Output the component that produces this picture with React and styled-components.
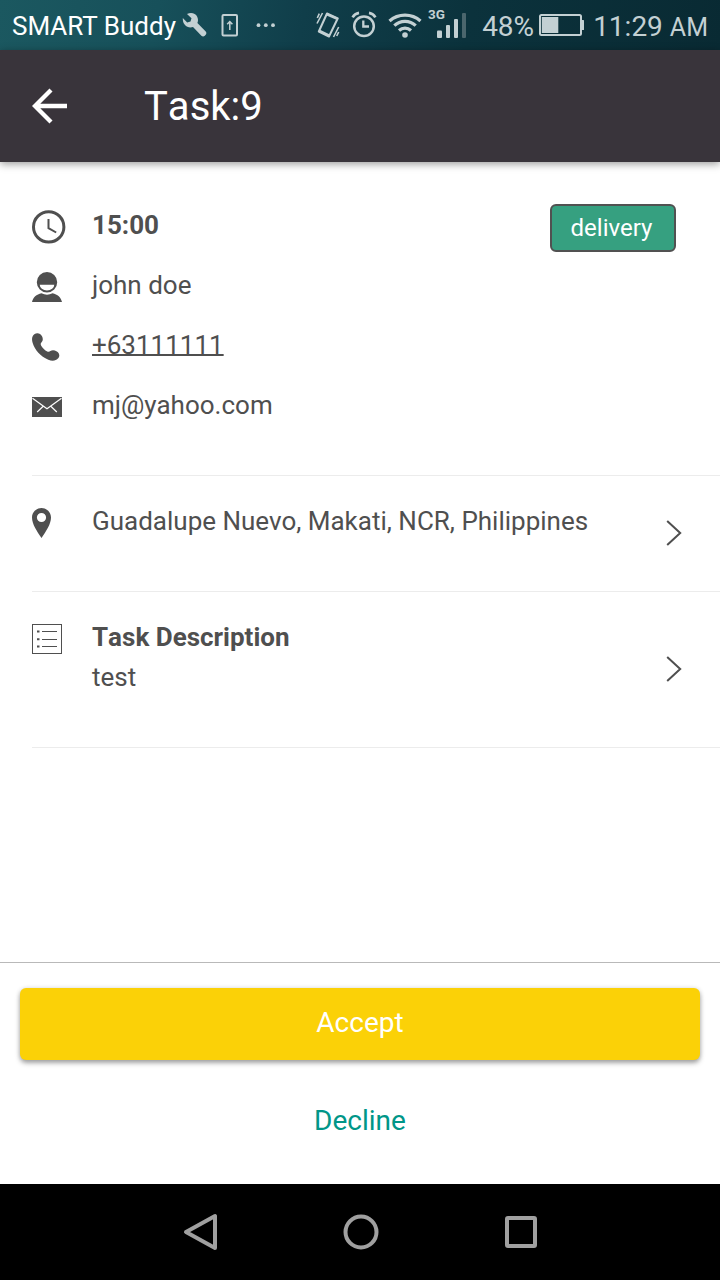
import React,{Component} from 'react';
import styled,{createGlobalStyle} from 'styled-components';

const GlobalStyle=createGlobalStyle`
    *{
        box-sizing:border-box;
    }
    body{
        margin:0;
        background:#fff;
        color:#4f4f4f;
        font-family:Roboto,sans-serif;
        font-size:26px;
        line-height:40px;
    }
    svg{
        display:block;
        flex:none;
    }
    button{
        border:0;
        padding:0;
        background:none;
        font-family:inherit;
    }
`
const Page=styled.div`
    height:1280px;
    display:flex;
    flex-direction:column;
    overflow:hidden;
`
const StatusBar=styled.div`
    height:50px;
    flex:none;
    display:flex;
    justify-content:space-between;
    padding:0 12px;
    color:#c3d0d3;
    line-height:53px;
    white-space:nowrap;
    background:linear-gradient(100deg,#1b5860 0%,#17505a 22%,#103e4a 42%,#0b323c 65%,#092a33 100%);
`
const StatusGroup=styled.div`
    display:flex;
    gap:${props=>props.$gap||0}px;
    margin-left:${props=>props.$left||0}px;
`
const Carrier=styled.span`
    width:170px;
    color:#fff;
`
const Percent=styled.span`
    font-size:28px;
    margin-left:14px;
    width:57px;
`
const Clock=styled.span`
    font-size:28px;
    margin-left:8px;
    small{
        font-size:25px;
        margin-left:7px;
    }
`
const Header=styled.header`
    height:112px;
    flex:none;
    display:flex;
    align-items:center;
    padding-left:32px;
    background:#39343b;
    color:#fff;
    box-shadow:0 2px 8px rgba(0,0,0,.4);
`
const Title=styled.h1`
    margin:1px 0 0 76px;
    font-size:40px;
    font-weight:400;
    line-height:48px;
    font-kerning:none;
`
const Content=styled.main`
    flex:1;
    padding-top:18px;
`
const Section=styled.section`
    display:flex;
    align-items:center;
    margin-left:32px;
    padding-right:38px;
    border-bottom:1px solid #ececec;
`
const List=styled.div`
    flex:1;
    display:flex;
    flex-direction:column;
    gap:20px;
    padding:25px 0 50px;
`
const Row=styled.div`
    display:flex;
`
const IconCell=styled.span`
    width:60px;
    flex:none;
    padding-top:${props=>props.$top}px;
`
const Text=styled.div`
    flex:1;
    white-space:nowrap;
    strong{
        display:block;
        font-weight:700;
        font-kerning:none;
    }
    a{
        color:inherit;
        text-decoration:underline;
        text-decoration-thickness:2px;
        text-underline-offset:0;
        text-decoration-skip-ink:none;
    }
`
const Badge=styled.span`
    align-self:flex-start;
    width:126px;
    height:48px;
    margin:24px 6px 0 0;
    border:2px solid #515151;
    border-radius:6px;
    background:#36a080;
    color:#fff;
    font-size:24px;
    line-height:44px;
    text-align:center;
    padding-right:3px;
`
const Footer=styled.footer`
    height:222px;
    flex:none;
    border-top:1px solid #b9b9b9;
    padding:25px 20px 0;
    display:flex;
    flex-direction:column;
    gap:24px;
`
const Button=styled.button`
    height:72px;
    border-radius:6px;
    font-size:28px;
    line-height:68px;
    padding:${props=>props.$primary?'0 0 2px':'2px 0 0'};
    color:${props=>props.$primary?'#fff':'#009688'};
    background:${props=>props.$primary?'#fbd107':'transparent'};
    box-shadow:${props=>props.$primary?'0 3px 5px rgba(0,0,0,.35),0 0 5px rgba(0,0,0,.1)':'none'};
`
const NavBar=styled.nav`
    height:96px;
    flex:none;
    display:flex;
    align-items:center;
    justify-content:center;
    gap:120px;
    background:#000;
`

const BackArrow=()=><svg width="36" height="36" viewBox="0 0 36 36" fill="none" stroke="#fff" strokeWidth="4.3">
    <path d="M19 2 3 18l16 16M2.5 18H35"/>
</svg>
const WrenchIcon=()=><svg width="26" height="50" viewBox="0 0 26 50" fill="#c3d0d3">
    <path d="M.8 18 5.200 22.600 8.500 21.500 9.500 18.300 5 14C9.200 12 13.500 13.300 15.200 16.700c1.100 2.200 1 4.300.2 6.300l8.300 8.500c.9 1 .9 2.200 0 3.200l-.9 1c-1 1-2.400 1-3.400 0l-8.400-8.700C5.700 28.700.3 24.900.8 18z"/>
</svg>
const UploadIcon=()=><svg width="18" height="50" viewBox="0 0 18 50" fill="none" stroke="#c3d0d3">
    <rect x="1.500" y="15" width="14.500" height="20.500" rx="1" strokeWidth="2"/>
    <path d="M8.800 30v-8M6.200 24.300 8.800 21.500l2.600 2.800" strokeWidth="1.500"/>
</svg>
const DotsIcon=()=><svg width="20" height="50" viewBox="0 0 20 50" fill="#c3d0d3">
    <circle cx="2.500" cy="25.200" r="1.900"/>
    <circle cx="9.800" cy="25.200" r="1.900"/>
    <circle cx="17" cy="25.200" r="1.900"/>
</svg>
const VibrateIcon=()=><svg width="24" height="50" viewBox="0 0 24 50" fill="none" stroke="#c3d0d3">
    <path d="m11 13.500 10.800 4.800L13 36.500 2.800 31.500z" strokeWidth="2" strokeLinejoin="round"/>
    <path d="M3.500 30.800 12.800 35.300M11 14.300 20.800 18.700" strokeWidth="2.400"/>
    <path d="m1.300 18 2-4.300M1 23.500l5.500-10.500M22.700 27l-5.200 10M22.700 32l-2 4" strokeWidth="1.600"/>
</svg>
const AlarmIcon=()=><svg width="26" height="50" viewBox="0 0 26 50" fill="none" stroke="#c3d0d3">
    <circle cx="13" cy="26.200" r="9.800" strokeWidth="2.500"/>
    <path d="M12.300 20.500V26.500H18" strokeWidth="2.300"/>
    <path d="M1.600 17.300c1.200-2.200 3.400-3.900 6.400-4.400M24.400 17.300c-1.200-2.200-3.400-3.900-6.400-4.400" strokeWidth="2.600"/>
</svg>
const WifiIcon=()=><svg width="34" height="50" viewBox="0 0 34 50" fill="none" stroke="#c3d0d3" strokeWidth="3.200">
    <path d="M1.500 21c8.700-7.900 22.300-7.900 31 0M6.300 25.700c6-5.700 15.400-5.700 21.400 0M11 30.500c3.500-3.200 8.500-3.200 12 0"/>
    <circle cx="17" cy="35" r="2.800" fill="#c3d0d3" stroke="none"/>
</svg>
const SignalIcon=()=><svg width="40" height="50" viewBox="0 0 40 50" fill="#c3d0d3">
    <text x="0" y="18.700" fontSize="13.500" fontWeight="700" fontFamily="Roboto,sans-serif">3G</text>
    <rect x="9" y="30.500" width="5" height="7.500" rx="1"/>
    <rect x="18" y="25" width="4" height="13" rx="1"/>
    <rect x="26" y="19" width="4" height="19" rx="1"/>
    <rect x="34" y="13" width="4" height="25" rx="1" fill="#4b666d"/>
</svg>
const BatteryIcon=()=><svg width="46" height="50" viewBox="0 0 46 50" fill="#c3d0d3">
    <rect x="1" y="15" width="41" height="20" rx="1.500" fill="none" stroke="#c3d0d3" strokeWidth="2"/>
    <rect x="2.800" y="17" width="16.500" height="16"/>
    <rect x="42" y="20" width="3" height="10" rx=".5"/>
</svg>

const ClockIcon=()=><svg width="34" height="34" viewBox="0 0 34 34" fill="none" stroke="#4f4f4f">
    <circle cx="16.700" cy="16.900" r="15.200" strokeWidth="3"/>
    <path d="M16.500 9v9.200L24.200 22.500" strokeWidth="2"/>
</svg>
const PersonIcon=()=><svg width="30" height="31" viewBox="0 0 30 31" fill="#4f4f4f">
    <path fillRule="evenodd" d="M15 0a10.200 10.200 0 0 1 0 20.400A10.200 10.200 0 0 1 15 0zM7.700 12.800a7.300 5.600 0 0 0 14.600 0z"/>
    <path d="M0 30c.8-4.300 4.500-7.800 9.500-8.700 3.500 1.900 7.500 1.900 11 0 5 .9 8.700 4.400 9.500 8.700z"/>
</svg>
const PhoneIcon=()=><svg width="28" height="29" viewBox="0 0 28 29" fill="#4f4f4f">
    <path d="M2.300 1.300C5-.6 8.500.3 10 3.200c1.400 2.800.8 4.700-.6 6.300-.9 1-.9 2-.2 3.200 1.500 2.600 3.500 4.500 6 5.700 1.200.6 2.200.5 3.200-.4 1.600-1.200 4-1.200 6.500.5 2.600 1.800 3.200 4.500 1.300 6.800-2.200 2.700-6 3.200-9.900 1.500C8.500 23.500 2.800 17 .6 9.800-.4 6.400-.2 3.200 2.300 1.300z"/>
</svg>
const MailIcon=()=><svg width="30" height="20" viewBox="0 0 30 20" fill="none" stroke="#fff" strokeWidth="1.200">
    <path d="M0 0h30v20H0z" fill="#4f4f4f" stroke="none"/>
    <path d="m.5 1.300 14.500 10.500L29.500 1.300M5.200 15l6-5.700M24.800 15l-6-5.700"/>
</svg>
const PinIcon=()=><svg width="19" height="30" viewBox="0 0 19 30" fill="#4f4f4f">
    <path fillRule="evenodd" d="M9.500 0C14.800 0 19 4.300 19 9.500 19 16 14 23.500 9.500 30 5 23.500 0 16 0 9.500 0 4.300 4.200 0 9.500 0zm0 4.900a4.600 4.600 0 1 0 0 9.200 4.600 4.600 0 0 0 0-9.200z"/>
</svg>
const ListIcon=()=><svg width="30" height="30" viewBox="0 0 30 30" fill="none" stroke="#4f4f4f">
    <rect x=".5" y=".5" width="29" height="29"/>
    <path d="M10 7.500h15M10 15.500h15M10 22.500h15"/>
    <path d="M5 7.500h2.500M5 15.300h2.500M5 22.500h2.500" strokeWidth="2"/>
</svg>
const Chevron=()=><svg width="16" height="27" viewBox="0 0 16 27" fill="none" stroke="#4f4f4f" strokeWidth="2">
    <path d="M1.200 1 14.200 13 1.200 25"/>
</svg>

class App extends Component{
    constructor(props){
        super(props)
        this.state={
            contact:[
                {icon:<ClockIcon/>,top:5,text:<strong>15:00</strong>},
                {icon:<PersonIcon/>,top:7,text:'john doe'},
                {icon:<PhoneIcon/>,top:8,text:<a>+63111111</a>},
                {icon:<MailIcon/>,top:12,text:'mj@yahoo.com'}
            ]
        }
    }
    render(){
        let {contact}=this.state;
        return <Page>
            <GlobalStyle/>
            <StatusBar>
                <StatusGroup>
                    <Carrier>SMART Buddy</Carrier>
                    <WrenchIcon/>
                    <StatusGroup $left={13} $gap={17}>
                        <UploadIcon/>
                        <DotsIcon/>
                    </StatusGroup>
                </StatusGroup>
                <StatusGroup>
                    <StatusGroup $gap={11}>
                        <VibrateIcon/>
                        <AlarmIcon/>
                        <WifiIcon/>
                    </StatusGroup>
                    <StatusGroup $left={6}>
                        <SignalIcon/>
                    </StatusGroup>
                    <Percent>48%</Percent>
                    <BatteryIcon/>
                    <Clock>11:29<small>AM</small></Clock>
                </StatusGroup>
            </StatusBar>
            <Header>
                <BackArrow/>
                <Title>Task:9</Title>
            </Header>
            <Content>
                <Section>
                    <List>
                        {
                            contact.map((item,index)=>{
                                return <Row key={index}>
                                    <IconCell $top={item.top}>{item.icon}</IconCell>
                                    <Text>{item.text}</Text>
                                </Row>
                            })
                        }
                    </List>
                    <Badge>delivery</Badge>
                </Section>
                <Section>
                    <List>
                        <Row>
                            <IconCell $top={7}><PinIcon/></IconCell>
                            <Text>Guadalupe Nuevo, Makati, NCR, Philippines</Text>
                        </Row>
                    </List>
                    <Chevron/>
                </Section>
                <Section>
                    <List>
                        <Row>
                            <IconCell $top={7}><ListIcon/></IconCell>
                            <Text><strong>Task Description</strong>test</Text>
                        </Row>
                    </List>
                    <Chevron/>
                </Section>
            </Content>
            <Footer>
                <Button $primary>Accept</Button>
                <Button>Decline</Button>
            </Footer>
            <NavBar>
                <svg width="40" height="40" viewBox="0 0 40 40" fill="none" stroke="#a0a0a0" strokeWidth="4" strokeLinejoin="round">
                    <path d="M35 4v32L6 20z"/>
                </svg>
                <svg width="40" height="40" viewBox="0 0 40 40" fill="none" stroke="#a0a0a0" strokeWidth="4">
                    <circle cx="21" cy="20" r="15.500"/>
                </svg>
                <svg width="40" height="40" viewBox="0 0 40 40" fill="none" stroke="#a0a0a0" strokeWidth="4">
                    <rect x="7" y="6" width="28" height="28" rx="1"/>
                </svg>
            </NavBar>
        </Page>
    }
}
export default App;
